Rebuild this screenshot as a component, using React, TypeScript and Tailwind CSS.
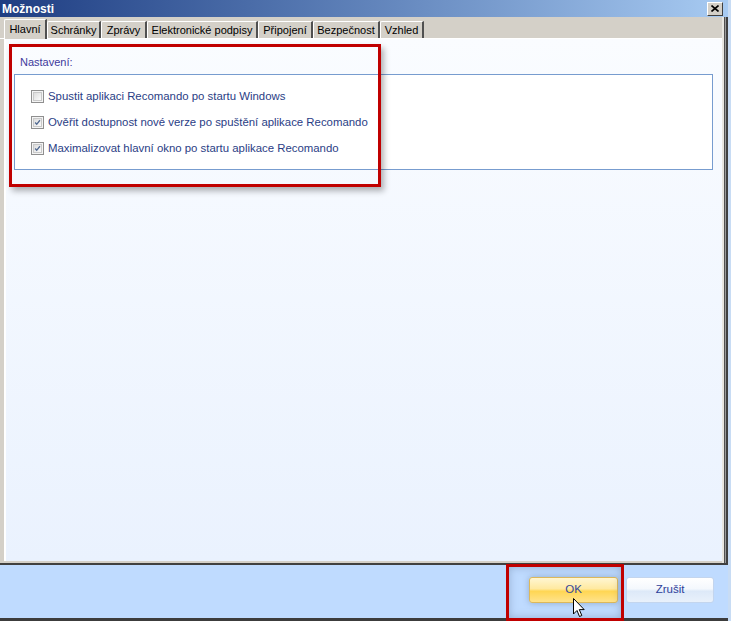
import React from 'react';

const tabs = [
  { label: 'Hlavní', w: 'w-[43px]', active: true },
  { label: 'Schránky', w: 'w-[54px]' },
  { label: 'Zprávy', w: 'w-[46px]' },
  { label: 'Elektronické podpisy', w: 'w-[111px]' },
  { label: 'Připojení', w: 'w-[55px]' },
  { label: 'Bezpečnost', w: 'w-[67px]' },
  { label: 'Vzhled', w: 'w-[44px]' },
];

const options = [
  { label: 'Spustit aplikaci Recomando po startu Windows', checked: false },
  { label: 'Ověřit dostupnost nové verze po spuštění aplikace Recomando', checked: true },
  { label: 'Maximalizovat hlavní okno po startu aplikace Recomando', checked: true },
];

function Checkbox({ checked }: { checked: boolean }) {
  return (
    <div className="w-[13px] h-[13px] border border-[#8f8f8f] bg-[#f4f4f4] p-[1px] flex-shrink-0">
      <div className="w-full h-full border border-[#c9c9c9] bg-gradient-to-br from-[#dcdcdc] to-[#fbfbfb] relative">
        {checked && (
          <svg viewBox="0 0 9 9" className="absolute inset-0 w-full h-full">
            <path d="M1.5 4.5 L3.5 6.8 L7.6 1.6" fill="none" stroke="#4f6890" strokeWidth="1.7" />
          </svg>
        )}
      </div>
    </div>
  );
}

export default function App() {
  return (
    <div className="w-[731px] h-[621px] flex overflow-hidden bg-[#c8dcf4] relative" style={{ fontFamily: '"Liberation Sans", Arial, sans-serif' }}>
      {/* WINDOW */}
      <div className="w-[728px] h-full flex flex-col bg-[#d4d0c8]">
        {/* Title bar */}
        <div className="h-[17px] flex items-center justify-between bg-gradient-to-r from-[#1f3d82] to-[#a8cbf2] pl-[2px] pr-[5px] flex-shrink-0">
          <span className="text-white font-bold text-[12px] leading-none">Možnosti</span>
          <div className="w-[16px] h-[14px] bg-[#d4d0c8] border-t border-l border-white border-r border-b border-r-[#404040] border-b-[#404040] flex items-center justify-center">
            <svg viewBox="0 0 8 7" className="w-[8px] h-[7px]">
              <path d="M0.5 0.5 L7.5 6.5 M7.5 0.5 L0.5 6.5" stroke="#000" strokeWidth="1.6" />
            </svg>
          </div>
        </div>

        <div className="flex-1 flex min-h-0">
          <div className="flex-1 flex flex-col min-w-0">
            {/* Tab strip */}
            <div className="h-[21px] flex items-end pl-[4px] flex-shrink-0">
              {tabs.map((t) => (
                <div
                  key={t.label}
                  className={`${t.w} ${t.active ? 'h-[20px] z-10 -mb-[1px]' : 'h-[17px]'} flex items-center justify-center bg-[#d4d0c8] border-l border-t border-white border-r-2 border-r-[#505050] rounded-tl-[2px] text-[11px] text-black whitespace-nowrap`}
                >
                  {t.label}
                </div>
              ))}
            </div>

            {/* Tab panel */}
            <div className="flex-1 flex flex-col min-h-0 border-t border-white">
              <div className="flex-1 flex min-h-0 pl-[4px] pb-[2px]">
                <div className="flex-1 border-l-2 border-white bg-gradient-to-b from-[#fafcff] to-[#eaf2fe] pt-[17px] pl-[8px] pr-[9px]">
                  <p className="text-[11px] leading-[12px] text-[#40399c] pl-[6px] h-[18px]">Nastavení:</p>
                  <div className="h-[96px] border border-[#779ccf] bg-white pt-[15px] pl-[16px] flex flex-col gap-[13px]">
                    {options.map((o) => (
                      <div key={o.label} className="flex items-center gap-[4px] h-[13px]">
                        <Checkbox checked={o.checked} />
                        <span className="text-[11.4px] text-[#2a3d85] whitespace-nowrap">{o.label}</span>
                      </div>
                    ))}
                  </div>
                </div>
              </div>
            </div>
          </div>
          {/* right window edge */}
          <div className="w-[6px] bg-[linear-gradient(to_right,#e8e6e0_0_2px,#505050_2px_3px,#9a9a9a_3px_4px,#404040_4px_6px)]" />
        </div>

        {/* Bottom bar */}
        <div className="h-[58px] flex-shrink-0 border-t-2 border-[#404040] border-b-[3px] border-b-[#3c3c3c] bg-[#bfdbff] flex items-center justify-end gap-[8px] pr-[14px] pb-[3px]">
          <div className="w-[89px] h-[26px] rounded-[3px] border border-[#dcb85c] bg-[linear-gradient(to_bottom,#fff6d2_0%,#ffe9a0_45%,#ffd653_55%,#ffe38c_100%)] flex items-center justify-center text-[11.5px] text-[#34489a] shadow-[0_0_6px_rgba(60,80,110,0.35)]">
            OK
          </div>
          <div className="w-[88px] h-[26px] rounded-[3px] border border-[#c3d5ee] bg-[linear-gradient(to_bottom,#ffffff_0%,#f4f8fd_45%,#dde9f8_55%,#e9f1fb_100%)] flex items-center justify-center text-[11.5px] text-[#2c409a]">
            Zrušit
          </div>
        </div>
      </div>

      {/* Highlight rectangles */}
      <div className="absolute left-[9px] top-[44px] w-[372px] h-[143px] border-[3px] border-[#c00000] shadow-[3px_4px_6px_rgba(0,0,0,0.3)]" />
      <div className="absolute left-[506px] top-[564px] w-[118px] h-[57px] border-[3px] border-[#c00000] shadow-[inset_0_0_8px_rgba(70,90,120,0.35)]" />

      {/* Cursor */}
      <svg viewBox="0 0 13 20" className="absolute left-[573px] top-[598px] w-[13px] h-[20px]">
        <path d="M0.5 0.5 L0.5 16 L4 12.5 L6.5 18.5 L8.8 17.5 L6.3 11.6 L11.2 11.6 Z" fill="#fff" stroke="#000" strokeWidth="1" strokeLinejoin="round" />
      </svg>
    </div>
  );
}
